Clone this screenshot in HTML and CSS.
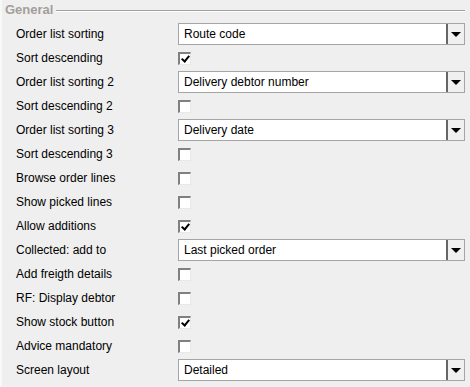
FILE: index.html
```html
<!DOCTYPE html>
<html lang="en">
<head>
  <meta charset="UTF-8" />
  <title>General</title>
  <link rel="stylesheet" href="styles.css">
</head>
<body>
  <div class="panel">
    <div class="legend"><span>General</span><i class="rule"></i></div>

    <div class="row"><span class="label">Order list sorting</span>
      <div class="select"><span class="value">Route code</span><span class="btn"><b class="arrow"></b></span></div></div>
    <div class="row"><span class="label">Sort descending</span><span class="check on"></span></div>
    <div class="row"><span class="label">Order list sorting 2</span>
      <div class="select"><span class="value">Delivery debtor number</span><span class="btn"><b class="arrow"></b></span></div></div>
    <div class="row"><span class="label">Sort descending 2</span><span class="check"></span></div>
    <div class="row"><span class="label">Order list sorting 3</span>
      <div class="select"><span class="value">Delivery date</span><span class="btn"><b class="arrow"></b></span></div></div>
    <div class="row"><span class="label">Sort descending 3</span><span class="check"></span></div>
    <div class="row"><span class="label">Browse order lines</span><span class="check"></span></div>
    <div class="row"><span class="label">Show picked lines</span><span class="check"></span></div>
    <div class="row"><span class="label">Allow additions</span><span class="check on"></span></div>
    <div class="row"><span class="label">Collected: add to</span>
      <div class="select"><span class="value">Last picked order</span><span class="btn"><b class="arrow"></b></span></div></div>
    <div class="row"><span class="label">Add freigth details</span><span class="check"></span></div>
    <div class="row"><span class="label">RF: Display debtor</span><span class="check"></span></div>
    <div class="row"><span class="label">Show stock button</span><span class="check on"></span></div>
    <div class="row"><span class="label">Advice mandatory</span><span class="check"></span></div>
    <div class="row"><span class="label">Screen layout</span>
      <div class="select"><span class="value">Detailed</span><span class="btn"><b class="arrow"></b></span></div></div>
  </div>
</body>
</html>
```
FILE: styles.css
```css
* {
  margin: 0;
  padding: 0;
  box-sizing: border-box;
}

body {
  font-family: 'Liberation Sans', Arial, sans-serif;
  font-size: 12px;
  color: #000;
  background: #efefef;
  width: 470px;
  height: 387px;
  overflow: hidden;
}

.panel {
  height: 387px;
  border-left: 2px solid #f8f8f8;
  padding-right: 5px;
}

/* Titel met lijn */
.legend {
  display: flex;
  align-items: center;
  height: 22px;
  padding-left: 3px;
  font-weight: bold;
  font-size: 13px;
  color: #a39e9b;
}

.legend span {
  padding-right: 3px;
  margin-top: -3px;
}

.rule {
  flex: 1;
  height: 2px;
  border-top: 1px solid #a0a0a0;
  border-bottom: 1px solid #fff;
}

.row {
  display: flex;
  align-items: center;
  height: 24px;
}

.label {
  width: 176px;
  padding-left: 14px;
}

/* Dropdown */
.select {
  flex: 1;
  display: flex;
  height: 22px;
  background: #fff;
  border: 1px solid #a5a5a5;
}

.value {
  flex: 1;
  padding-left: 5px;
  line-height: 20px;
}

.btn {
  width: 18px;
  border-left: 2px solid #666;
  background: #f0f0f0;
  display: flex;
  align-items: center;
  justify-content: center;
}

.arrow {
  width: 0;
  height: 0;
  border-left: 5px solid transparent;
  border-right: 5px solid transparent;
  border-top: 5px solid #000;
}

/* Vinkjes */
.check {
  width: 13px;
  height: 13px;
  background: #fff;
  border-top: 2px solid #808080;
  border-left: 2px solid #808080;
  border-right: 1px solid #e8e8e8;
  border-bottom: 1px solid #e8e8e8;
  position: relative;
}

.check.on::after {
  content: "";
  position: absolute;
  left: 3px;
  top: 0;
  width: 3px;
  height: 6px;
  border-right: 2px solid #000;
  border-bottom: 2px solid #000;
  transform: rotate(40deg);
}
```
